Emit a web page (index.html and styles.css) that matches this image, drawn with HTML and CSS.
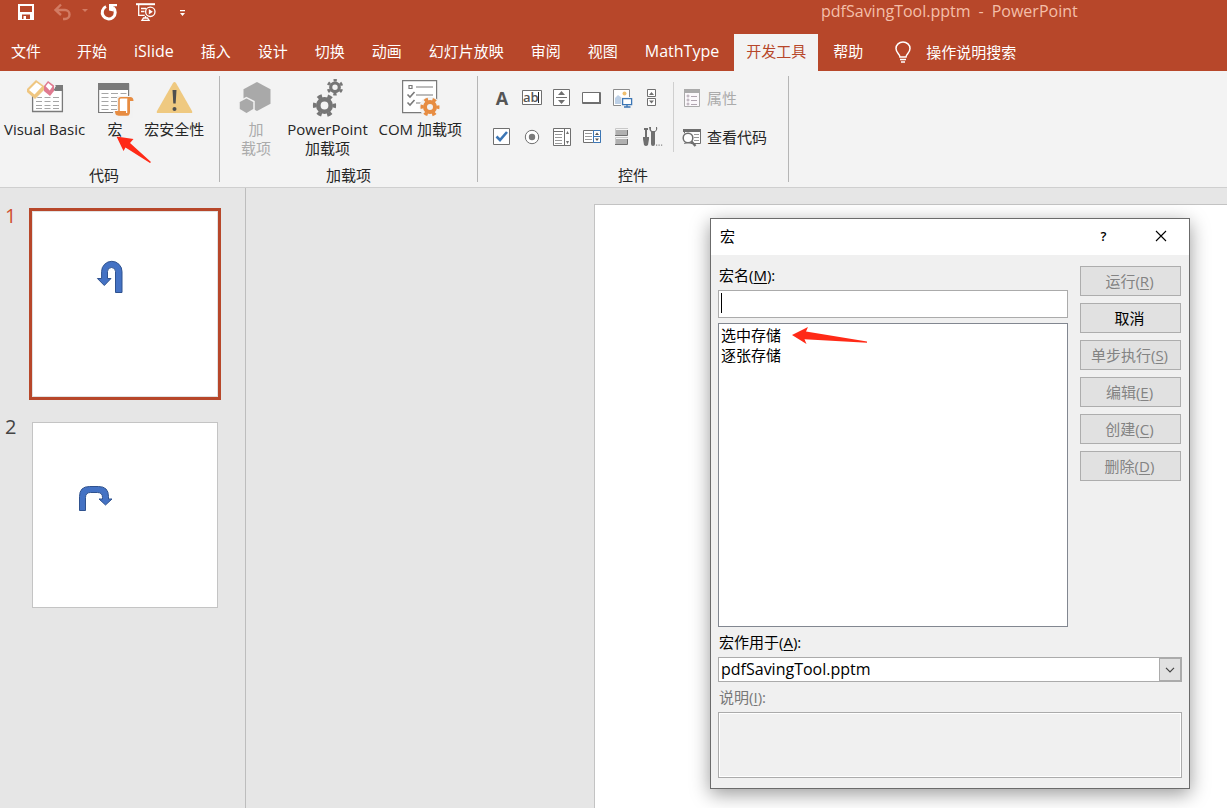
FILE: index.html
```html
<!DOCTYPE html>
<html lang="zh-CN">
<head>
<meta charset="utf-8">
<title>pdfSavingTool.pptm - PowerPoint</title>
<link rel="stylesheet" href="styles.css">
</head>
<body>
<div class="app">
  <header class="topbar">
    <div class="titlebar">
      <div class="qat">
        <button class="qat-btn" aria-label="保存"><svg width="22" height="22" viewBox="0 0 22 22"><path fill="#fff" fill-rule="evenodd" d="M3 3h16v16H3zM5 5v6h12V5zM7 13.500V18h1.500v-3h2.500v3h4v-4.500z"/></svg></button>
        <button class="qat-btn" aria-label="撤消"><svg width="22" height="22" viewBox="0 0 22 22" fill="none" stroke="#d27b63" stroke-width="2.400"><path d="M4 9h10a4.500 4.500 0 0 1 0 9h-2M10 3.500L4.500 9l5.500 5"/></svg></button>
        <button class="qat-btn narrow" aria-label="撤消选项"><svg width="10" height="22" viewBox="0 0 10 22"><path fill="#d27b63" d="M2 8h6l-3 3z"/></svg></button>
        <button class="qat-btn wide" aria-label="重复"><svg width="22" height="22" viewBox="0 0 22 22"><path fill="none" stroke="#fff" stroke-width="3" d="M8 5.500A6.500 6.500 0 1 0 15 6.500"/><path fill="#fff" d="M11 3h8v2.300h-3.500V10.500L11 9.500z"/></svg></button>
        <button class="qat-btn" aria-label="从头开始"><svg width="22" height="22" viewBox="0 0 22 22" fill="none" stroke="#fff" stroke-width="1.300"><path d="M1 3.200h19" stroke-width="2"/><path d="M3.700 4v10.300h6M6 7.500h5M6 10.500h3.500M10.500 15v2M7 19.300h7l-1.500-2.300h-4z"/><circle cx="15.300" cy="10.800" r="4.700"/><path fill="#fff" stroke="none" d="M13.800 8v5.600l4-2.800z"/></svg></button>
        <button class="qat-btn" aria-label="自定义快速访问工具栏"><svg width="22" height="22" viewBox="0 0 22 22"><path fill="#fff" d="M9 9h5v1.200H9zM9 12h5l-2.500 3z"/></svg></button>
      </div>
      <div class="doc-title"><span>pdfSavingTool.pptm</span><span>-</span><span>PowerPoint</span></div>
    </div>
    <nav class="tabs">
      <button class="tab file">文件</button>
      <button class="tab">开始</button>
      <button class="tab latin">iSlide</button>
      <button class="tab">插入</button>
      <button class="tab">设计</button>
      <button class="tab">切换</button>
      <button class="tab">动画</button>
      <button class="tab">幻灯片放映</button>
      <button class="tab">审阅</button>
      <button class="tab">视图</button>
      <button class="tab latin">MathType</button>
      <button class="tab active">开发工具</button>
      <button class="tab">帮助</button>
      <button class="tab tell-me"><svg width="18" height="24" viewBox="0 0 18 24" fill="none" stroke="#fff" stroke-width="1.500"><path d="M6 17c0-3-4-4-4-8.500a7 6.500 0 0 1 14 0C16 13 12 14 12 17zM6 19.500h6M7 22h4"/></svg>操作说明搜索</button>
    </nav>
  </header>

  <section class="ribbon">
    <div class="group code">
      <div class="items">
        <button class="big vb">
          <svg width="38" height="40" viewBox="0 0 38 40"><path fill="#fff" stroke="#7a7a7a" stroke-width="1.300" d="M6.600 11.500h29.800v22H6.600z"/><path fill="#7a7a7a" d="M28.500 7H37v6h-8.500z"/><path stroke="#a6a6a6" stroke-dasharray="6 2.500" d="M10 19.500h24M10 23.500h24M10 27.500h24M10 30.500h24"/><path fill="#f2f2f2" d="M0 10L9 1l9 6 5-6 7 7-6 9-7-4-7 8z"/><path fill="#efc680" d="M1 11L10 2l8 6v4l-9 9-8-7z"/><path fill="#fff" d="M3 12l7.500-7.500L16 8.500 8.500 16.500z"/><path fill="#e07a90" d="M18 8l4-5 6 4.500V13l-4 5-6-5z"/><path fill="#fff" d="M19.700 8.300l2.500-3.200 4.300 3.300-2.800 4z"/></svg>
          <span>Visual Basic</span>
        </button>
        <button class="big macro">
          <svg width="38" height="40" viewBox="0 0 38 40"><path fill="#fff" stroke="#7a7a7a" stroke-width="1.200" d="M2.600 6h30v28.500h-30z"/><path fill="#7a7a7a" d="M2 5h31v7H2z"/><path stroke="#a6a6a6" stroke-dasharray="7 2.500" d="M5.500 15.500h25M5.500 19.500h25M5.500 23.500h25M5.500 27.500h25M5.500 31.500h25"/><path fill="#f2f2f2" d="M21 18h17v8h-1v14H17v-7h4z"/><path fill="#fff" stroke="#e78c41" stroke-width="1.500" d="M23 33.500V21.500q0-1.800 2-1.800h9q-2 0-2 2v15h-9z"/><path fill="#e78c41" d="M34 19q3.500 0 3.500 4H34v11q0 3.500-3.500 3.500H22q-3 0-3-4.500h11v2h2V22q0-3 2-3z"/></svg>
          <span>宏</span>
        </button>
        <button class="big security">
          <svg width="38" height="40" viewBox="0 0 38 40"><path fill="#efc980" d="M18 5q1.500-2 3 0l16 28q1 2-1 2H3q-2 0-1-2z"/><path fill="#4f4f4f" d="M17.500 12h4l-.8 13.500h-2.400z"/><circle cx="19.500" cy="31" r="2" fill="#4f4f4f"/></svg>
          <span>宏安全性</span>
        </button>
      </div>
      <div class="group-name">代码</div>
    </div>
    <div class="group addins">
      <div class="items">
        <button class="big single" disabled>
          <svg width="38" height="40" viewBox="0 0 38 40"><path fill="#a9a9a9" d="M20 4l13.500 7.200v14.500L20 33 6.500 25.700V11.200z"/><path fill="#a9a9a9" stroke="#f2f2f2" stroke-width="1.500" d="M9.500 19.700l7.500 3.800v8L9.500 36 2 31.500v-8z"/></svg>
          <span>加<br>载项</span>
        </button>
        <button class="big ppt">
          <svg width="38" height="40" viewBox="0 0 38 40" fill="none" stroke="#767676"><circle cx="15.500" cy="27.500" r="6.200" stroke-width="4.600"/><circle cx="15.500" cy="27.500" r="9.800" stroke-width="3.600" stroke-dasharray="4.600 5.660" stroke-dashoffset="2.300"/><circle cx="26" cy="9.300" r="4.300" stroke-width="3.200"/><circle cx="26" cy="9.300" r="7" stroke-width="2.600" stroke-dasharray="3.300 4.030" stroke-dashoffset="-2"/></svg>
          <span>PowerPoint<br>加载项</span>
        </button>
        <button class="big com">
          <svg width="40" height="40" viewBox="0 0 40 40" fill="none" stroke="#7a7a7a"><path fill="#fff" stroke-width="1.200" d="M2.600 2.600h34v32h-34z"/><path stroke-width="1.200" d="M9 7.500h3v3H9zM16 9h17M16 17h17M16 25h10"/><path stroke-width="1.600" d="M7.500 16.500l2.500 2.500 4.500-5M7.500 24.500L10 27l4.500-5"/><circle cx="30" cy="29" r="10.500" fill="#f2f2f2" stroke="none"/><g stroke="#e78c41"><circle cx="30" cy="29" r="5" stroke-width="4"/><circle cx="30" cy="29" r="8" stroke-width="3" stroke-dasharray="3.800 4.580" stroke-dashoffset="1.900"/></g></svg>
          <span>COM 加载项</span>
        </button>
      </div>
      <div class="group-name">加载项</div>
    </div>
    <div class="group controls">
      <div class="items">
        <div class="palette">
          <button aria-label="标签"><span class="glyph-a">A</span></button>
          <button aria-label="文本框"><svg width="24" height="23" viewBox="0 0 24 23"><path fill="#fff" stroke="#6f6f6f" d="M2.500 4.500h19v14h-19z"/><text class="glyph-ab" x="3" y="16">ab</text><path stroke="#222" d="M18.500 6v11"/></svg></button>
          <button aria-label="数值调节钮"><svg width="24" height="23" viewBox="0 0 24 23"><path fill="#fff" stroke="#6f6f6f" d="M3.500 3.500h16v16h-16zM6 11.500h11"/><path fill="#6f6f6f" d="M8 9l3.500-4L15 9zM8 14l3.500 4 3.500-4z"/></svg></button>
          <button aria-label="命令按钮"><svg width="24" height="23" viewBox="0 0 24 23"><path fill="#fff" stroke="#6f6f6f" d="M2.500 6.500h18v11h-18z"/><path fill="none" stroke="#6f6f6f" stroke-width="2" d="M3 17h17V7"/></svg></button>
          <button aria-label="图像"><svg width="24" height="23" viewBox="0 0 24 23"><path fill="#fff" stroke="#8a8a8a" d="M3.500 3.500h16v16h-16z"/><path fill="#bdd0e6" d="M5 18v-6l3-3 4 3v6z"/><circle cx="14.500" cy="7.500" r="2" fill="#efbf70"/><path fill="#f2f2f2" d="M11 11h12v12H11z"/><path fill="#fff" stroke="#3c76b5" stroke-width="1.300" d="M12.600 12.600h9v6h-9zM17 18.500v2.500M14 21h6.500"/></svg></button>
          <button aria-label="滚动条"><svg width="24" height="23" viewBox="0 0 24 23"><path fill="#fff" stroke="#6f6f6f" d="M7.500 3.500h8v7h-8zM7.500 12.500h8v7h-8z"/><path fill="#6f6f6f" d="M9 9l2.500-3L14 9zM9 14.500l2.500 3 2.500-3z"/></svg></button>
          <button aria-label="复选框"><svg width="24" height="23" viewBox="0 0 24 23"><path fill="#fff" stroke="#6f6f6f" d="M3.500 3.500h16v16h-16z"/><path fill="none" stroke="#3c76b5" stroke-width="2.600" d="M6.500 11.500l3.500 3.500 7-8"/></svg></button>
          <button aria-label="选项按钮"><svg width="24" height="23" viewBox="0 0 24 23"><circle cx="12" cy="12" r="6.700" fill="#fff" stroke="#6f6f6f"/><circle cx="12" cy="12" r="3.200" fill="#7a7a7a"/></svg></button>
          <button aria-label="列表框"><svg width="24" height="23" viewBox="0 0 24 23"><path fill="#fff" stroke="#6f6f6f" d="M3.500 3.500h17v17h-17zM3 6.500h10M14.500 3v18"/><path stroke="#999" d="M5 9.500h7M5 12.500h7M5 15.500h7M5 18.500h7"/><path fill="#6f6f6f" d="M16 9l1.500-3L19 9zM16 16l1.500 3 1.500-3z"/></svg></button>
          <button aria-label="组合框"><svg width="24" height="23" viewBox="0 0 24 23"><path fill="#fff" stroke="#6f6f6f" d="M3.500 5.500h17v12h-17z"/><path stroke="#999" d="M5 8.500h7M5 11.500h7M5 14.500h7"/><path fill="#fff" stroke="#3c76b5" d="M13.500 5.500h7v12h-7zM13.500 11.500h7"/><path fill="#555" d="M15 10l2-2.500 2 2.500zM15 13.500l2 2.500 2-2.500z"/></svg></button>
          <button aria-label="切换按钮"><svg width="24" height="23" viewBox="0 0 24 23"><path fill="#b0b0b0" d="M6 5h11v5H6zM6 14h11v5H6z"/><path fill="none" stroke="#6f6f6f" d="M5 10.500h12.500V5M5 19.500h12.500V14"/><path fill="none" stroke="#c8c8c8" d="M5.500 10V3.500H18M5.500 19v-6.500H18"/></svg></button>
          <button aria-label="其他控件"><svg width="24" height="23" viewBox="0 0 24 23"><path fill="#6f6f6f" d="M4 3h4v2H7v7h2v2l-1 6q-2 2-4 0l-1-6v-2h2V5H4zM9 2q0 3 2 5v12q0 2 2 2t2-2V7q3-2 2-5h-1v3l-1 1h-3l-1-1V2z"/><path fill="#888" d="M16 19.500h1.200v1.200H16zM18.500 19.500h1.200v1.200h-1.200zM21 19.500h1.200v1.200H21z"/></svg></button>
        </div>
        <div class="wide-actions">
          <button disabled><svg width="22" height="23" viewBox="0 0 22 23"><path fill="#fbf8fb" stroke="#aaa" d="M3.500 3.500h15v17h-15z"/><path fill="#aaa" d="M3 3h16v4H3z"/><g fill="none" stroke="#b0a5b0"><circle cx="7" cy="10" r="1"/><circle cx="7" cy="14" r="1"/><circle cx="7" cy="18" r="1"/><path d="M10 10.500h6M10 14.500h6M10 18.500h6"/></g></svg>属性</button>
          <button><svg width="22" height="23" viewBox="0 0 22 23"><path fill="#fff" stroke="#6f6f6f" d="M3.500 4.500h16v14h-16z"/><path fill="#6f6f6f" d="M2 4h18v3H2z"/><path stroke="#999" d="M13 9.500h5M13 12.500h5M13 15.500h5"/><circle cx="7" cy="13" r="6" fill="#f2f2f2"/><circle cx="7" cy="13" r="4.800" fill="#fff" stroke="#6f6f6f" stroke-width="1.500"/><path stroke="#6f6f6f" stroke-width="2.400" d="M10.500 16.500l4 4.500"/></svg>查看代码</button>
        </div>
      </div>
      <div class="group-name">控件</div>
    </div>
  </section>

  <div class="workspace">
    <aside class="slides">
      <div class="slide-item selected">
        <span class="slide-no">1</span>
        <div class="frame"><div class="thumb"><svg width="184" height="184" viewBox="0 0 184 184"><path fill="#4472c4" stroke="#2f528f" d="M82.500 80.500h6.500V59.500a10.200 10.200 0 0 0-20.400 0v7h-4.200l6.900 7 6.700-7h-3.500v-7a4 4 0 0 1 8 0z"/></svg></div></div>
      </div>
      <div class="slide-item">
        <span class="slide-no">2</span>
        <div class="frame"><div class="thumb"><svg width="184" height="184" viewBox="0 0 184 184"><path fill="#4472c4" stroke="#2f528f" d="M46.500 87.500h6V74.500q0-5 5-5h7q5 0 5 5v1.500h-3.500l6.500 6 6.500-6h-3.500v-2.500q0-10-10-10h-9q-10 0-10 10z"/></svg></div></div>
      </div>
    </aside>
    <main class="editor"><div class="slide-canvas"></div></main>
  </div>
</div>

<svg class="pointer pointer-macro" width="36" height="28" viewBox="0 0 36 28"><path fill="#ff2a17" d="M.500.500l17 2.500-3.500 4L35 26l-1 1L9.500 11.500 7.500 15z"/></svg>

<div class="dialog" role="dialog" aria-labelledby="dlg-title">
  <div class="dialog-title">
    <span id="dlg-title">宏</span>
    <div class="caption-buttons">
      <button aria-label="帮助">?</button>
      <button aria-label="关闭"><svg width="12" height="12" viewBox="0 0 12 12"><path stroke="#000" stroke-width="1.100" d="M1 1l10 10M11 1L1 11"/></svg></button>
    </div>
  </div>
  <div class="dialog-body">
    <div class="dialog-top">
      <div class="fields">
        <label for="macro-name">宏名(<u>M</u>):</label>
        <input id="macro-name" class="macro-name" type="text">
        <select class="macro-list" size="2" aria-label="宏列表">
          <option>选中存储</option>
          <option>逐张存储</option>
        </select>
      </div>
      <div class="actions">
        <button disabled>运行(<u>R</u>)</button>
        <button>取消</button>
        <button disabled>单步执行(<u>S</u>)</button>
        <button disabled>编辑(<u>E</u>)</button>
        <button disabled>创建(<u>C</u>)</button>
        <button disabled>删除(<u>D</u>)</button>
      </div>
    </div>
    <label for="macro-in">宏作用于(<u>A</u>):</label>
    <div class="combo">
      <select id="macro-in"><option>pdfSavingTool.pptm</option></select>
      <span class="combo-arrow"><svg width="10" height="6" viewBox="0 0 10 6"><path fill="none" stroke="#444" stroke-width="1.200" d="M1 .800l4 4 4-4"/></svg></span>
    </div>
    <label class="muted" for="macro-desc">说明(<u>I</u>):</label>
    <textarea id="macro-desc" class="description" disabled></textarea>
  </div>
  <svg class="pointer pointer-list" width="78" height="20" viewBox="0 0 78 20"><path fill="#ff2a17" d="M1 9l16-8-2 4.500L76 15.500v1.300L13.500 13.200 15.500 18z"/></svg>
</div>
</body>
</html>
```
FILE: styles.css
```css
* { box-sizing: border-box; }

body {
  margin: 0;
  overflow: hidden;
  background: #e6e6e6;
  color: #262626;
  font-family: "Open Sans", "Noto Sans CJK SC", sans-serif;
  font-size: 15px;
  line-height: 20px;
}

button, input, select, textarea {
  margin: 0;
  padding: 0;
  border: 0;
  border-radius: 0;
  outline: 0;
  background: none;
  color: inherit;
  font: inherit;
}

svg { display: block; flex: none; }
u { text-underline-offset: 2px; }

.app {
  display: flex;
  flex-direction: column;
  min-height: 100vh;
}

/* Title bar and tabs */
.topbar { background: #b7472a; color: #fff; }
.titlebar { display: flex; height: 24px; margin-bottom: 10px; }
.qat { display: flex; padding-left: 8px; width: 821px; }
.qat-btn {
  display: flex;
  align-items: center;
  justify-content: center;
  width: 36px;
}
.qat-btn.narrow { width: 10px; }
.qat-btn.wide { width: 38px; }
.doc-title {
  display: flex;
  gap: 8px;
  padding-bottom: 2px;
  align-items: center;
  color: #f4bfa9;
  font-size: 16px;
}
.tabs { display: flex; gap: 3px; height: 37px; }
.tab { padding: 0 12px 3px; white-space: nowrap; }
.tab.file { padding-left: 11px; padding-right: 21px; }
.tab.latin { font-size: 16px; }
.tab.active { background: #f3f3f3; color: #b7472a; }
.tab.tell-me {
  display: flex;
  align-items: center;
  gap: 14px;
  padding-bottom: 2px;
  padding-left: 16px;
}

/* Ribbon */
.ribbon {
  display: flex;
  padding: 5px 0;
  background: #f3f3f3;
  border-bottom: 1px solid #cfcfcf;
}
.group {
  display: flex;
  flex-direction: column;
  justify-content: space-between;
  height: 106px;
  padding: 2px 8px 0;
  border-right: 1px solid #b5b5b5;
}
.items { display: flex; align-items: flex-start; }
.group-name { line-height: 14px; text-align: center; }
.group.code { width: 220px; padding-left: 0; padding-right: 11px; }
.group.addins { width: 258px; }
.group.controls { width: 311px; }
.big {
  display: flex;
  flex-direction: column;
  align-items: center;
  gap: 2px;
  line-height: 19px;
  white-space: nowrap;
}
.big.vb { width: 90px; }
.big.macro { width: 52px; }
.big.security { width: 68px; }
.big.single { width: 56px; }
.big.ppt { width: 88px; }
.big.com { width: 98px; }
.ribbon button:disabled { color: #ababab; }

.palette {
  display: grid;
  grid-template-columns: repeat(6, 30px);
  grid-auto-rows: 39px;
  padding-left: 1px;
}
.palette button {
  display: flex;
  align-items: center;
  justify-content: center;
}
.glyph-a { font-size: 18px; font-weight: 700; color: #555; }
.glyph-ab { font-size: 13px; font-weight: 600; fill: #555; }
.wide-actions {
  display: grid;
  grid-auto-rows: 39px;
  margin-left: 6px;
  padding-left: 8px;
  background: linear-gradient(#cfcfcf, #cfcfcf) 0 50% / 1px 70px no-repeat;
}
.wide-actions button { display: flex; align-items: center; gap: 4px; }

/* Slide list and editor */
.workspace { display: flex; flex: 1; }
.slides {
  display: flex;
  flex-direction: column;
  gap: 19px;
  width: 246px;
  padding: 20px 0 0 5px;
  border-right: 1px solid #bdbdbd;
}
.slide-item { display: flex; }
.slide-no {
  width: 24px;
  font-size: 20px;
  line-height: 16px;
  color: #444;
}
.selected .slide-no { color: #d0502f; }
.frame { border: 3px solid transparent; }
.selected .frame { border-color: #b7472a; }
.thumb { background: #fff; border: 1px solid #c4c4c4; }
.selected .thumb { border-color: #e2e2e2; }
.editor { display: flex; flex: 1; padding: 16px 0 0 348px; }
.slide-canvas {
  flex: 1;
  background: #fff;
  border: solid #c3c3c3;
  border-width: 1px 0 0 1px;
}

/* Macro dialog */
.dialog {
  position: absolute;
  left: 710px;
  top: 218px;
  width: 480px;
  background: #f0f0f0;
  border: 1px solid #6b6b6b;
  color: #000;
  box-shadow: 0 5px 18px rgba(0, 0, 0, 0.4);
}
.dialog-title {
  display: flex;
  align-items: center;
  justify-content: space-between;
  height: 36px;
  padding: 0 0 2px 9px;
  background: #fff;
}
.caption-buttons { display: flex; }
.caption-buttons button {
  display: flex;
  align-items: center;
  justify-content: center;
  width: 57px;
  height: 34px;
  font-size: 13px;
  font-weight: 600;
}
.dialog-body {
  display: flex;
  flex-direction: column;
  gap: 5px;
  padding: 10px 7px;
}
.dialog-top { display: flex; gap: 12px; }
.fields { display: flex; flex: 1; flex-direction: column; gap: 5px; }
.dialog label { padding-left: 1px; }
.dialog .muted { color: #787878; }
.macro-name {
  height: 28px;
  padding: 0 3px;
  border: 1px solid #ababab;
  background: linear-gradient(#000, #000) 2px 2px / 1px 20px no-repeat, #fff;
}
.macro-list {
  height: 304px;
  border: 1px solid #828790;
  background: #fff;
  overflow: hidden;
}
.macro-list option { height: 20px; padding: 0 2px; line-height: 20px; }
.actions {
  display: flex;
  flex-direction: column;
  gap: 7px;
  width: 102px;
  padding: 1px 1px 0 0;
}
.actions button {
  height: 30px;
  padding: 0 2px 1px 0;
  background: #e1e1e1;
  border: 1px solid #adadad;
  white-space: nowrap;
}
.actions button:disabled { color: #838383; }
.combo {
  display: flex;
  height: 25px;
  background: #fff;
  border: 1px solid #ababab;
}
.combo select {
  flex: 1;
  padding: 0 0 1px 2px;
  appearance: none;
  font-size: 16px;
}
.combo-arrow {
  display: flex;
  align-items: center;
  justify-content: center;
  width: 22px;
  background: #e1e1e1;
  border: 1px solid #ababab;
  pointer-events: none;
}
.description {
  height: 66px;
  background: #f0f0f0;
  border: 1px solid #ababab;
  box-shadow: inset 0 0 0 1px #fff;
  resize: none;
}

/* Red pointers drawn over the interface */
.pointer { position: absolute; pointer-events: none; }
.pointer-macro { left: 116px; top: 136px; }
.pointer-list { left: 80px; top: 107px; }
```
